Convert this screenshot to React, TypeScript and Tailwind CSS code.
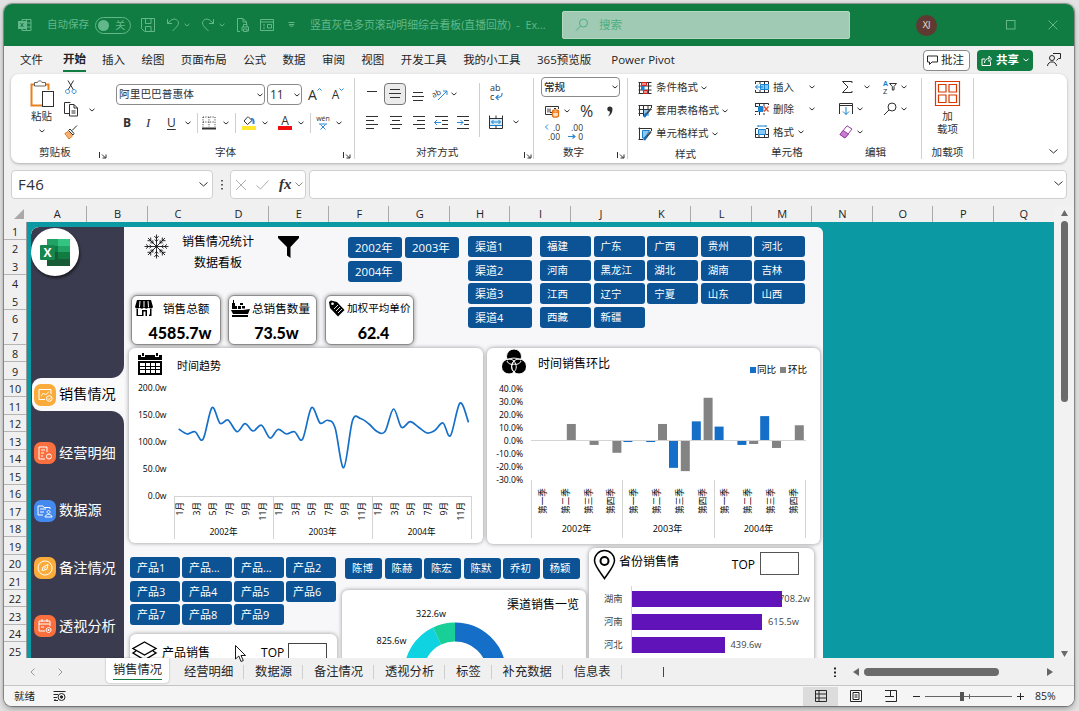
import type { ReactNode } from "react";
import clsx from "clsx";

const RIBBON_TABS = ["绘图", "页面布局", "公式", "数据", "审阅", "视图", "开发工具", "我的小工具", "365预览版"];
const COLUMNS = "ABCDEFGHIJKLMNOPQ".split("");
const ROWS = Array.from({ length: 25 }, (_, i) => i + 1);
const YEARS = ["2002年", "2003年", "2004年"];
const CHANNELS = ["渠道1", "渠道2", "渠道3", "渠道4"];
const PROVINCES = [
  "福建", "广东", "广西", "贵州", "河北",
  "河南", "黑龙江", "湖北", "湖南", "吉林",
  "江西", "辽宁", "宁夏", "山东", "山西",
  "西藏", "新疆",
];
const PRODUCTS = ["产品1", "产品...", "产品...", "产品2", "产品3", "产品4", "产品5", "产品6", "产品7", "产品8", "产品9"];
const PEOPLE = ["陈博", "陈赫", "陈宏", "陈默", "乔初", "杨颖"];

// 月度趋势曲线上的点
const TREND: [number, number][] = [
  [178.7, 429], [187, 434], [195, 431.7], [203, 439.3], [212, 407.7], [220, 423.3],
  [228, 420], [237, 431.7], [245, 423.7], [253, 431], [261.5, 425.3], [270, 438],
  [278, 429.5], [286.3, 434], [294.5, 431.7], [302.5, 439.3], [311.5, 407.7], [320, 423],
  [327.5, 420.3], [335, 427.5], [343.7, 467.7], [352.5, 420.5], [360.5, 418.5], [369, 424],
  [377, 431.5], [385, 431.5], [393.5, 409], [401.5, 427.3], [410, 421.7], [418, 426.7],
  [427, 433], [435, 430.3], [443, 423], [450.5, 435.7], [460, 403], [468.5, 422.3],
];
const YOY = [0, 0, 0, 0, -0.8, -0.8, -20.5, 15, 11, -3, 19, 0];
const MOM = [0, 13, -3, -9, 0, 13, -23, 33, 0, -2.3, -5.3, 12];

function smooth(points: [number, number][]) {
  let d = `M${points[0][0]} ${points[0][1]}`;
  for (let i = 0; i < points.length - 1; i++) {
    const p0 = points[i - 1] || points[i];
    const [p1, p2] = [points[i], points[i + 1]];
    const p3 = points[i + 2] || p2;
    d += `C${p1[0] + (p2[0] - p0[0]) / 6} ${p1[1] + (p2[1] - p0[1]) / 6} ${p2[0] - (p3[0] - p1[0]) / 6} ${p2[1] - (p3[1] - p1[1]) / 6} ${p2[0]} ${p2[1]}`;
  }
  return d;
}

type IconProps = { className?: string; w?: number; h?: number; children: ReactNode };

// 线性图标的统一外壳
function Icon({ className, w = 14, h = 14, children }: IconProps) {
  return (
    <svg
      width={w}
      height={h}
      viewBox={`0 0 ${w} ${h}`}
      fill="none"
      stroke="currentColor"
      strokeWidth={1}
      className={clsx("shrink-0 overflow-visible", className)}
    >
      {children}
    </svg>
  );
}

const Chev = ({ className }: { className?: string }) => (
  <Icon w={6} h={4} className={className}>
    <path d="M0.5 0.8L3 3L5.5 0.8" />
  </Icon>
);

const Sep = ({ className }: { className?: string }) => (
  <div className={clsx("w-px shrink-0 bg-[#cfcfcf]", className)} />
);

const Launcher = ({ className }: { className?: string }) => (
  <Icon w={8} h={8} className={className}>
    <path d="M0.5 7V1M3 3.5L6.5 7M7 3.5V7H3.5" />
  </Icon>
);

function TitleBar() {
  return (
    <header className="flex h-[42px] shrink-0 items-center bg-[#107c41] text-[#62b88b]">
      <Icon className="ml-[14px]">
        <path d="M4 3V1.5H13V12.5H4V11M4 5H13M4 9H13M8.5 1.5V12.5" />
        <rect x="0.5" y="3.5" width="7" height="7" fill="#62b88b" />
        <path d="M2.5 5L5.5 9M5.5 5L2.5 9" stroke="#107c41" />
      </Icon>
      <span className="ml-[15px] w-[42px] shrink-0 whitespace-nowrap text-[10.5px]">自动保存</span>
      <div className="ml-[6px] flex h-[17px] w-[36px] shrink-0 items-center rounded-full border border-current pl-[2px]">
        <div className="h-[11px] w-[11px] rounded-full bg-[#62b88b]" />
        <span className="ml-[6px] text-[10.5px] leading-none">关</span>
      </div>
      <Icon className="ml-[10px]">
        <path d="M1.5 0.5H13.5V13.5H3.5L0.5 10.5V0.5H2M4.5 0.5V5.5H10V0.5M4.5 13.5V8.5H10V13.5" />
      </Icon>
      <Icon className="ml-[11px]">
        <path d="M1.5 1V5.5H6M1.5 5.5L5 2.3C7.5 0.2 11 1 12.2 3.5C13 5.5 12 7.5 10.5 9L6.5 13" />
      </Icon>
      <Chev className="ml-[4px]" />
      <Icon className="ml-[11px]">
        <path d="M12.5 1V5.5H8M12.5 5.5L9 2.3C6.5 0.2 3 1 1.8 3.5C1 5.5 2 7.5 3.5 9L7.5 13" />
      </Icon>
      <Chev className="ml-[4px]" />
      <Icon className="ml-[11px]">
        <path d="M4 13.5H1.5V0.5H7L10.5 4V6.5M7 0.5V4H10.5M6 13V9H12.5V13H10.8M7.5 9V6.5H11V9M7.5 11H11V13.5H7.5Z" />
      </Icon>
      <Icon className="ml-[10px]">
        <path d="M0.5 1.5H13.5V12.5H0.5ZM0.5 4H13.5M3 7H5M3 10H5M7.5 6.5H11.5V10H7.5Z" />
      </Icon>
      <Icon w={7} h={6} className="ml-[14px]">
        <path d="M0.5 0.5H6.5M1.2 2.5H5.8L3.5 5Z" />
      </Icon>
      <span className="ml-[15px] w-[240px] shrink-0 whitespace-pre text-[10.8px]">竖直灰色多页滚动明细综合看板(直播回放)  -  Ex...</span>
      <div className="ml-[12px] flex h-[28px] w-[288px] shrink-0 items-center rounded-[2px] border border-[#b5d8c4] bg-[#a0cab3] text-[#4fae7f]">
        <Icon className="ml-[12px]">
          <circle cx="8.5" cy="5" r="4" />
          <path d="M5.6 8L1 12.7" />
        </Icon>
        <span className="ml-[10px] text-[11.5px]">搜索</span>
      </div>
      <div className="ml-[66px] flex h-[21px] w-[21px] shrink-0 items-center justify-center rounded-full bg-[#5f3a32] text-[9px] text-[#f1e4df]">XJ</div>
      <Icon w={10} h={10} className="ml-[69px]">
        <rect x="0.5" y="0.5" width="8.5" height="8.5" />
      </Icon>
      <Icon w={10} h={10} className="ml-[32px]">
        <path d="M0.5 0.5L9.5 9.5M9.5 0.5L0.5 9.5" />
      </Icon>
    </header>
  );
}

function RibbonTabs() {
  return (
    <nav className="flex h-[28px] shrink-0 items-center whitespace-nowrap text-[11.5px] text-[#242424]">
      <span className="ml-[16px]">文件</span>
      <span className="ml-[20px] border-b-2 border-[#107c41] pb-px font-bold leading-[20px]">开始</span>
      <span className="ml-[16px]">插入</span>
      {RIBBON_TABS.map((tab) => (
        <span key={tab} className="ml-[16.4px]">{tab}</span>
      ))}
      <span className="ml-[20px]">Power Pivot</span>
      <div className="ml-auto flex h-[21px] w-[47px] items-center rounded-[4px] border border-[#8a8a8a] bg-white">
        <Icon w={12} h={10} className="ml-[3px]">
          <path d="M0.5 1H10.5V7H5L2.5 9.5V7H0.5Z" />
        </Icon>
        <span className="ml-[2px] leading-none">批注</span>
      </div>
      <div className="ml-[7px] flex h-[21px] w-[56px] items-center rounded-[4px] bg-[#107c41] text-white">
        <Icon w={11} h={11} className="ml-[4px]">
          <path d="M4 4H1V10.5H9.5V6.5M3.5 8C3.5 5 5.5 3.5 8 3.5V1L10.5 4L8 6.5V4.5" />
        </Icon>
        <span className="ml-[4px] font-bold leading-none">共享</span>
        <Chev className="ml-[4px]" />
      </div>
      <Icon className="ml-[14px] mr-[13px]">
        <circle cx="5" cy="5" r="2.5" />
        <path d="M0.5 13C1 7.5 9 7.5 9.5 13M6 0.5H13.5V5.5H11.5L9.5 7.5" />
      </Icon>
    </nav>
  );
}

const GroupLabel = ({ children }: { children: ReactNode }) => (
  <div className="mt-auto flex h-[20px] items-center whitespace-nowrap pb-[2px] text-[10.6px] leading-none">{children}</div>
);

function ClipboardGroup() {
  return (
    <section className="flex w-[96px] flex-col">
      <div className="flex pt-[6px]">
        <div className="ml-[18px] flex w-[25px] flex-col items-center">
          <Icon w={24} h={28}>
            <path d="M4.5 4.5H1.5V25.5H12M15.5 4.5H18.5V10" stroke="#e8801f" strokeWidth={2} />
            <path d="M4.5 6V2.5H7.5C7.5 0.3 12 0.3 12 2.5H15.5V6Z" fill="white" stroke="#666" />
            <rect x="12.5" y="11.5" width="11" height="15" fill="white" />
          </Icon>
          <span className="mt-[3px] text-[10.5px] leading-none">粘贴</span>
          <Chev className="mt-[7px]" />
        </div>
        <div className="ml-[10px] flex w-[14px] flex-col">
          <Icon h={15}>
            <path d="M4 0.5L9.5 10M9.5 0.5L4 10" />
            <path d="M3.5 9.5a2 2 0 1 0 .1 0M10 9.5a2 2 0 1 0 .1 0" stroke="#2b88d8" />
          </Icon>
          <Icon className="mt-[7px]" h={15}>
            <path d="M5 11.5H0.5V0.5H6.5M5.5 2.5H10L13.5 6V14H5.5ZM10 2.5V6H13.5M7.5 9H11.5M7.5 11H11.5" />
          </Icon>
          <Icon className="mt-[8px]" h={15}>
            <path d="M13 0.5L8 5.5M6 4L10 8.5L9 10L4.5 5.5Z" />
            <path d="M4 6.5L8.5 11L5 14L0.8 8.5Z" fill="#f5b27a" stroke="#e8801f" />
          </Icon>
        </div>
        <Chev className="ml-[11px] mt-[28px]" />
      </div>
      <GroupLabel>
        <span className="ml-[28px]">剪贴板</span>
        <Launcher className="ml-auto mr-0 mt-[5px]" />
      </GroupLabel>
    </section>
  );
}

function FontGroup() {
  return (
    <section className="flex w-[247px] flex-col">
      <div className="mt-[10px] flex h-[21px] items-center text-[10.7px]">
        <div className="ml-[9px] flex h-[21px] w-[149px] items-center rounded-[4px] border border-[#8a8a8a] pl-[2px]">
          <span className="leading-none">阿里巴巴普惠体</span>
          <Chev className="ml-auto mr-[1px]" />
        </div>
        <div className="ml-[2px] flex h-[21px] w-[35px] items-center rounded-[4px] border border-[#8a8a8a] pl-[2px] text-[12px]">
          11
          <Chev className="ml-auto mr-[1px]" />
        </div>
        <span className="ml-[6px] text-[14px] leading-none">A</span>
        <Icon w={5} h={3} className="mb-[10px] text-[#2b88d8]"><path d="M0.5 2.5L2.5 0.5L4.5 2.5" /></Icon>
        <span className="ml-[10px] text-[12px] leading-none">A</span>
        <Icon w={5} h={3} className="mb-[10px] text-[#2b88d8]"><path d="M0.5 0.5L2.5 2.5L4.5 0.5" /></Icon>
      </div>
      <div className="mt-[7px] flex h-[21px] items-center text-[12px]">
        <span className="ml-[16px] w-[8px] font-bold">B</span>
        <span className="ml-[15px] w-[6px] font-['Liberation_Serif'] text-[13px] italic">I</span>
        <span className="ml-[15px] w-[9px] underline underline-offset-2">U</span>
        <Chev className="ml-[9px]" />
        <Sep className="ml-[6px] h-[20px]" />
        <Icon className="ml-[4px]">
          <path d="M1 1H13M1 1V11M13 1V11M7 1V11M1 6H13" strokeDasharray="1 1.4" />
          <path d="M0 12.5H14" strokeWidth={2} />
        </Icon>
        <Chev className="ml-[7px]" />
        <Sep className="ml-[6px] h-[20px]" />
        <Icon className="ml-[6px]">
          <path d="M6 0.5L2 5L5.5 8.5L10 4.5L6.5 1" />
          <path d="M9 3C11 2.5 12 4 11.5 8" stroke="#2b88d8" strokeWidth={2} />
          <rect x="0" y="10" width="14" height="4" fill="#ffe92e" stroke="none" />
        </Icon>
        <Chev className="ml-[6px]" />
        <div className="ml-[10px] flex w-[14px] flex-col items-center">
          <span className="text-[12px] leading-[11px]">A</span>
          <div className="h-[4px] w-full bg-[#f20d0d]" />
        </div>
        <Chev className="ml-[6px]" />
        <Sep className="ml-[6px] h-[20px]" />
        <div className="ml-[5px] flex w-[14px] flex-col items-center">
          <span className="text-[7px] leading-[7px]">wén</span>
          <Icon w={8} h={7} className="mt-px text-[#2b88d8]"><path d="M0 1H8M1.5 1.5L6.5 6.5M6.5 1.5L1.5 6.500" /></Icon>
        </div>
        <Chev className="ml-[6px]" />
      </div>
      <GroupLabel>
        <span className="ml-[108px]">字体</span>
        <Launcher className="ml-auto mr-[3px] mt-[5px]" />
      </GroupLabel>
    </section>
  );
}

function AlignGroup() {
  return (
    <section className="flex w-[179px] flex-col border-l border-[#d0d0d0] my-[4px]">
      <div className="flex h-[61px] -mb-[4px] pt-[5px]">
        <div className="w-[124px]">
          <div className="flex h-[22px] items-center">
            <Icon className="ml-[10px]"><path d="M2 4.5H12" /></Icon>
            <div className="ml-[5px] flex h-[22px] w-[22px] items-center justify-center rounded-[4px] border border-[#777] bg-[#ebebeb]">
              <Icon><path d="M2 2.5H12M1 6.5H13M2 10.5H12" /></Icon>
            </div>
            <Icon className="ml-[5px]"><path d="M2 5.5H12M1 9.500H13M2 13.500H12" /></Icon>
            <Icon className="ml-[8px]" w={15}>
              <text x="-1" y="9" fontSize="8" fill="currentColor" stroke="none" transform="rotate(-25 4 7)">ab</text>
              <path d="M5 13L14 4M10 4H14V8" stroke="#2b88d8" />
            </Icon>
            <Chev className="ml-[3px]" />
          </div>
          <div className="mt-[6px] flex h-[22px] items-center">
            <Icon className="ml-[11px]"><path d="M0 1.5H12M0 5.5H8M0 9.5H12M0 13.5H8" /></Icon>
            <Icon className="ml-[9px]"><path d="M1 1.5H13M3 5.5H11M1 9.5H13M3 13.5H11" /></Icon>
            <Icon className="ml-[9px]"><path d="M1 1.5H13M5 5.5H13M1 9.5H13M5 13.5H13" /></Icon>
            <Icon className="ml-[8px]"><path d="M1 1.5H14M8 5.5H14M8 9.5H14M1 13.5H14" /><path d="M7 7.5H0.5M3 5L0.5 7.5L3 10" stroke="#2b88d8" /></Icon>
            <Icon className="ml-[9px]"><path d="M0 1.5H12M7 5.5H12M7 9.5H12M0 13.5H12" /><path d="M0 7.5H6M3.5 5L6 7.5L3.5 10" stroke="#2b88d8" /></Icon>
          </div>
        </div>
        <Sep className="h-[54px]" />
        <div>
          <div className="ml-[10px] flex h-[22px] w-[15px] flex-col text-[9px] leading-[9px]">
            <span>ab</span>
            <span className="flex">
              c
              <Icon w={8} h={8} className="ml-px mt-px text-[#2b88d8]"><path d="M7 0C7.500 3 6 4.500 1 4.500M3.500 2L1 4.500L3.500 7" strokeWidth={1.200} /></Icon>
            </span>
          </div>
          <div className="mt-[6px] flex h-[22px] items-center">
            <Icon className="ml-[9px]">
              <rect x="0.5" y="3.5" width="13" height="7" fill="#d5ebfa" stroke="#1583cf" />
              <path d="M0.500 0.500V13.500M13.500 0.500V13.500M0.500 3.500H13.500M0.500 13.500H13.500M7 0.500V3.500M7 10.500V13.500" />
              <path d="M2.500 7H11.500M4.500 5L2.500 7L4.500 9M9.500 5L11.500 7L9.500 9" stroke="#1583cf" />
            </Icon>
            <Chev className="ml-[10px]" />
          </div>
        </div>
      </div>
      <div className="mt-auto -mb-[4px]">
        <GroupLabel>
          <span className="ml-[61px]">对齐方式</span>
          <Launcher className="ml-auto mr-[1px] mt-[5px]" />
        </GroupLabel>
      </div>
    </section>
  );
}

function NumberGroup() {
  return (
    <section className="my-[4px] flex w-[94px] flex-col border-l border-[#d0d0d0]">
      <div className="-mt-[1px] ml-[7px] flex h-[20px] w-[79px] items-center rounded-[4px] border border-[#8a8a8a] pl-[2px] text-[10.6px] font-medium">
        <span className="leading-none">常规</span>
        <Chev className="ml-auto mr-[1px]" />
      </div>
      <div className="mt-[4px] flex h-[20px] items-center">
        <Icon className="ml-[11px]">
          <path d="M7 10.500H0.500V2.500H13.500V5M3 4.500V8.500M5 4.500V8.500H7M9 4.500H11" />
          <path d="M7.500 7C7.500 5.500 13.500 5.500 13.500 7V12C13.500 13.500 7.500 13.500 7.500 12ZM7.500 7C7.500 8.500 13.500 8.500 13.500 7" fill="#fde0c2" stroke="#e8700f" strokeWidth={1.300} />
        </Icon>
        <Chev className="ml-[5px]" />
        <span className="ml-[10px] w-[14px] text-[16px] leading-none">%</span>
        <Icon w={6} h={11} className="ml-[13px]">
          <path d="M5.500 3C5.500 6.500 4 9 1 10.500C2.500 8.500 3 7 2.800 5.500C-0.500 5.500 -0.500 0.500 2.800 0.500C4.500 0.500 5.500 1.500 5.500 3Z" fill="currentColor" stroke="none" />
        </Icon>
      </div>
      <div className="mt-[1px] flex h-[20px] items-center text-[8.5px] leading-[9px]">
        <div className="ml-[11px] flex w-[15px] flex-col items-end">
          <span className="flex w-full items-start justify-between">
            <Icon w={4} h={6} className="mt-px text-[#2b88d8]"><path d="M3 0.5L0.5 3L3 5.5" /></Icon>
            .0
          </span>
          <span>.00</span>
        </div>
        <div className="ml-[8px] flex w-[15px] flex-col items-end">
          <span>.00</span>
          <span className="flex w-full items-center justify-between">
            <Icon w={8} h={5} className="text-[#2b88d8]"><path d="M0 2.500H7M4.500 0.500L7 2.500L4.500 4.500" strokeWidth={1.200} /></Icon>
            0
          </span>
        </div>
      </div>
      <div className="mt-auto -mb-[4px]">
        <GroupLabel>
          <span className="ml-[29px]">数字</span>
          <Launcher className="ml-auto mr-[2px] mt-[5px]" />
        </GroupLabel>
      </div>
    </section>
  );
}

// 表格类命令图标
const Grid = ({ kind }: { kind: string }) => (
  <Icon>
    {kind === "cond" && (
      <>
        <path d="M0.500 1.500H13.500M0.500 5H13.500M0.500 9H13.500M0.500 12.500H13.500M1.500 1V13M10.500 1V13" />
        <path d="M3.500 1.500H8.500V4.500H3.500ZM5.500 9.500H9.500V12.500H5.500Z" fill="#f48a8a" stroke="#d8201c" />
        <rect x="3" y="5" width="3.500" height="4" fill="#1583cf" stroke="none" />
      </>
    )}
    {kind === "table" && (
      <>
        <path d="M0.500 1.500H13.500M0.500 5.500H13.500M0.500 9.500H5M1.500 1V12M5.500 1V12M10 1V6M13.500 1V4" />
        <rect x="6" y="6" width="5" height="6" fill="#8cc8f2" stroke="none" />
        <path d="M13 4.500L8.500 10" stroke="#444" strokeWidth={1.800} />
        <path d="M8.500 9.500L6 13" stroke="#1670b5" strokeWidth={2.600} />
      </>
    )}
    {kind === "style" && (
      <>
        <path d="M0.500 1.500H13.500V4M1.500 0.500V12.500H5M0.500 12.500H5" />
        <path d="M4.500 3.500H11.500L7 11H4.500Z" fill="#8cc8f2" stroke="#1583cf" />
        <path d="M13 4.500L8.500 10" stroke="#444" strokeWidth={1.800} />
        <path d="M8.500 9.500L6 13" stroke="#1670b5" strokeWidth={2.600} />
      </>
    )}
    {kind === "insert" && (
      <>
        <path d="M0.500 4V1.500H13.500V4M0.500 10V12.500H13.500V10M5 1.500V4M9.500 1.500V4M5 10V12.500M9.500 10V12.500" />
        <path d="M5.500 4.500H13.500V9.500H5.500ZM9.500 4.500V9.500" fill="#8cc8f2" stroke="#1583cf" />
        <path d="M8 7H0.500M3 4.500L0.500 7L3 9.500" stroke="#1583cf" />
      </>
    )}
    {kind === "delete" && (
      <>
        <path d="M0 1.500H13.500M0 4.500H3M0 9.500H3M0.500 1.500V4M4.500 1.500V4M9 1.500V4M13.500 1.500V3M4.500 10V13M9 11V13M0 12.500H1" />
        <path d="M3.500 4.500H8V9.500H3.500Z" fill="#1583cf" stroke="#1583cf" />
        <path d="M9 4.500L13.500 9.500M13.500 4.500L9 9.500" stroke="#e04a2b" strokeWidth={1.300} />
      </>
    )}
    {kind === "format" && (
      <>
        <path d="M3 3.500H0.500V12.500H13.500V3.500H11M0.500 9.500H3M11 9.500H13.500M4 12.500V10M9.500 12.500V10" />
        <path d="M3.500 4.500H10.500V9.500H3.500ZM3 1H11M3 0V2M11 0V2" fill="#8cc8f2" stroke="#1583cf" />
      </>
    )}
  </Icon>
);

function Command({ icon, label, gap }: { icon: string; label: string; gap?: string }) {
  return (
    <div className="flex h-[23px] items-center whitespace-nowrap text-[10.5px]">
      <Grid kind={icon} />
      <span className="ml-[4px] leading-none">{label}</span>
      <Chev className={gap || "ml-[3px]"} />
    </div>
  );
}

function Ribbon() {
  return (
    <div className="ml-[7px] flex h-[89px] w-[1056px] shrink-0 rounded-[8px] bg-white text-[#303030] shadow-[0_1px_3px_rgba(0,0,0,0.28)]">
      <ClipboardGroup />
      <FontGroup />
      <AlignGroup />
      <NumberGroup />
      <section className="my-[4px] flex w-[121px] flex-col border-l border-[#d0d0d0]">
        <div className="-mt-[2px] ml-[10px]">
          <Command icon="cond" label="条件格式" />
          <Command icon="table" label="套用表格格式" />
          <Command icon="style" label="单元格样式" />
        </div>
        <div className="-mb-[4px] mt-auto pl-[47px]"><GroupLabel>样式</GroupLabel></div>
      </section>
      <section className="flex w-[88px] flex-col pl-[7px] pt-[2px]">
        <Command icon="insert" label="插入" gap="ml-[15px]" />
        <Command icon="delete" label="删除" gap="ml-[15px]" />
        <Command icon="format" label="格式" gap="ml-[4px]" />
        <div className="mt-auto pl-[16px]"><GroupLabel>单元格</GroupLabel></div>
      </section>
      <section className="flex w-[85px] flex-col pl-px pt-[2px]">
        <div className="flex h-[23px] items-center">
          <Icon className="ml-[3px]"><path d="M12 3V1.5H2.5L8 7L2.5 12.5H12V11" /></Icon>
          <Chev className="ml-[10px]" />
          <Icon className="ml-[13px]">
            <text x="0" y="6" fontSize="7" fontWeight="bold" fill="#1583cf" stroke="none">A</text>
            <text x="0" y="13.500" fontSize="7.500" fill="currentColor" stroke="none">Z</text>
            <path d="M6.5 3.5H13.5L11 6.5V10H9.3V6.5Z" />
          </Icon>
          <Chev className="ml-[4px]" />
        </div>
        <div className="flex h-[23px] items-center">
          <Icon className="ml-[2px]"><path d="M0.5 12V1.5H13.5V12M0.5 3.5H13.5" /><path d="M7 5V12.5M4 9.5L7 12.5L10 9.5" stroke="#1583cf" /></Icon>
          <Chev className="ml-[4px]" />
          <Icon className="ml-[20px]"><circle cx="9" cy="5" r="4" /><path d="M6 8L1 13" /></Icon>
          <Chev className="ml-[4px]" />
        </div>
        <div className="flex h-[23px] items-center">
          <Icon className="ml-[2px]">
            <path d="M8 0.8L13 4L6 13L1 9.5Z" stroke="#9a3fa8" />
            <path d="M4 5.5L9.5 9L6 13L1 9.5Z" fill="#c77fd0" stroke="#9a3fa8" />
          </Icon>
          <Chev className="ml-[4px]" />
        </div>
        <div className="mt-auto pl-[28px]"><GroupLabel>编辑</GroupLabel></div>
      </section>
      <section className="my-[4px] flex w-[53px] flex-col items-center border-x border-[#d0d0d0]">
        <Icon w={25} h={25} className="mt-[3px] text-[#d83b01]">
          <path d="M0.5 0.5H24.5V24.5H0.5ZM3.5 3.5H11V11H3.5ZM14 3.5H21.5V11H14ZM3.5 14H11V21.5H3.5ZM14 14H21.5V21.5H14Z" strokeWidth={1.2} />
        </Icon>
        <div className="mt-[4px] text-center text-[10.5px] leading-[13px]">加<br />载项</div>
        <div className="-mb-[4px] mt-auto"><GroupLabel>加载项</GroupLabel></div>
      </section>
      <Icon w={9} h={5} className="ml-auto mr-[9px] mt-[75px]"><path d="M0.5 0.5L4.5 4L8.5 0.5" /></Icon>
    </div>
  );
}

function FormulaBar() {
  return (
    <div className="mt-[7px] flex h-[29px] shrink-0 items-center text-[#303030]">
      <div className="ml-[7px] flex h-[29px] w-[202px] items-center rounded-[4px] border border-[#cfcfcf] bg-white pl-[6px] text-[15px] tracking-[0.5px]">
        F46
        <Icon w={9} h={5} className="ml-auto mr-[4px]"><path d="M0.5 0.5L4.5 4L8.5 0.5" /></Icon>
      </div>
      <Icon w={2} h={10} className="ml-[8px]"><path d="M1 0V10" strokeWidth={1.5} strokeDasharray="1.5 2.5" /></Icon>
      <div className="ml-[7px] flex h-[29px] w-[76px] items-center rounded-[4px] border border-[#cfcfcf] bg-white">
        <Icon w={12} h={12} className="ml-[4px] text-[#b0b0b0]"><path d="M1 1L11 11M11 1L1 11" /></Icon>
        <Icon w={13} h={10} className="ml-[9px] text-[#b0b0b0]"><path d="M0.5 5.5L4.5 9L12.5 0.5" /></Icon>
        <span className="ml-[10px] w-[13px] font-['Liberation_Serif'] text-[15px] font-bold italic leading-none">fx</span>
        <Icon w={8} h={5} className="ml-[3px] text-[#888]"><path d="M0.5 0.5L4 4L7.5 0.5" /></Icon>
      </div>
      <div className="ml-[3px] flex h-[29px] w-[758px] items-center rounded-[4px] border border-[#cfcfcf] bg-white">
        <Icon w={9} h={5} className="mb-[3px] ml-auto mr-[3px]"><path d="M0.5 0.5L4.5 4L8.5 0.5" /></Icon>
      </div>
    </div>
  );
}

// 切片器按钮
const Slicer = ({ label, className }: { label: string; className?: string }) => (
  <div className={clsx("flex h-[21px] items-center whitespace-nowrap rounded-[3px] bg-[#0b5394] pl-[7px] text-[10.5px] leading-none text-white", className)}>
    {label}
  </div>
);

const MENU = [
  { label: "经营明细", color: "bg-[#f96f3d]", d: "M5 5H13V10M5 5V17H11M7 8H11M7 11H10M7 14H9M12.5 14.5a2.5 2.5 0 1 0 5 0a2.5 2.5 0 1 0-5 0" },
  { label: "数据源", color: "bg-[#4489ee]", d: "M4 6H9L10 7.5H16V9M4 6V15H9M6 9H12M6 12H10M14.5 10.5a1.5 1.5 0 1 0 .1 0M11 17C11.5 13.5 17.5 13.5 18 17Z" },
  { label: "备注情况", color: "bg-[#fbab3a]", d: "M11 4a7 7 0 1 0 .1 0M8 14L9 10L14 7.5L13 12L9 13.5M10 11.5L12 10" },
  { label: "透视分析", color: "bg-[#f96f3d]", d: "M5 6H16V11M5 6V16H11M5 9H16M8 4V7M13 4V7M7 12H10M14.5 12.5a2.5 2.5 0 1 0 .1 0M14.5 14V16M13.5 15H15.5" },
];

function Sidebar() {
  return (
    <aside className="flex w-[93px] shrink-0 flex-col">
      <div className="h-[151px] shrink-0 rounded-br-[13px] rounded-tl-[8px] bg-[#3a3b4e] pt-px">
        <div className="flex h-[48px] w-[48px] items-center justify-center rounded-full bg-white shadow-[1px_2px_3px_rgba(0,0,0,0.6)]">
          <svg width="30" height="29" viewBox="0 0 30 29">
            <path d="M7 1H18V14H7Z" fill="#21a366" />
            <path d="M18 1H30V8H18Z" fill="#33c481" />
            <path d="M18 8H30V14H18Z" fill="#21a366" />
            <path d="M7 14H30V28H7Z" fill="#185c37" />
            <path d="M18 14H30V21H18Z" fill="#107c41" />
            <path d="M7 8H18V14H7Z" fill="#107c41" />
            <rect x="0" y="7" width="15" height="15" rx="1" fill="#17864c" />
            <text x="7.5" y="18.5" textAnchor="middle" fontSize="12" fontWeight="bold" fill="white">X</text>
          </svg>
        </div>
      </div>
      <div className="h-[33px] shrink-0 bg-[#3a3b4e] pl-[1px]">
        <div className="flex h-full items-center rounded-l-[9px] bg-[#fafafb]">
          <div className="ml-[2px] h-[22px] w-[22px] rounded-[7px] bg-[#fbab3a] text-white">
            <Icon w={22} h={22}><path d="M11 15.5H5V5.5H17V10M7 12L9.5 9L11.5 11L15 7.5M12.5 14.5a2.8 2.8 0 1 0 5.6 0a2.8 2.8 0 1 0-5.6 0M14 14.5L15 15.5L17 13.5" /></Icon>
          </div>
          <span className="ml-[3px] text-[14.2px] leading-none text-black">销售情况</span>
        </div>
      </div>
      <div className="flex-1 rounded-tr-[13px] bg-[#3a3b4e] pt-[13px]">
        {MENU.map((item) => (
          <div key={item.label} className="flex h-[57.7px] items-center">
            <div className={clsx("ml-[3px] h-[22px] w-[22px] shrink-0 rounded-[7px] text-white", item.color)}>
              <Icon w={22} h={22}><path d={item.d} /></Icon>
            </div>
            <span className="ml-[3px] whitespace-nowrap text-[14.2px] leading-none text-white">{item.label}</span>
          </div>
        ))}
      </div>
    </aside>
  );
}

function Card({ icon, label, value, className, textClass }: { icon: ReactNode; label: string; value: string; className: string; textClass: string }) {
  return (
    <div className={clsx("h-[50px] shrink-0 rounded-[6px] border border-[#8d8d8d] bg-white pt-[3px] shadow-[0_0_4px_rgba(0,0,0,0.45)]", className)}>
      <div className="flex h-[19px] items-center whitespace-nowrap text-black">
        {icon}
        <span className={clsx("leading-none", textClass)}>{label}</span>
      </div>
      <div className="mt-[5px] pl-[8px] text-center font-['Lato'] text-[16px] font-black leading-[20px] text-black">{value}</div>
    </div>
  );
}

function TopArea() {
  return (
    <div className="flex h-[121px] shrink-0">
      <div className="w-[344px] shrink-0">
        <div className="flex h-[68px] items-start text-black">
          <Icon w={25} h={25} className="ml-[20px] mt-[7px]">
            {[0, 45, 90, 135, 180, 225, 270, 315].map((a) => (
              <path key={a} d="M12.5 12.5V0.5M10.300 2L12.5 4.500L14.700 2M10.800 5.500L12.5 7.500L14.200 5.500" strokeWidth={0.8} transform={`rotate(${a} 12.5 12.5)`} />
            ))}
          </Icon>
          <div className="ml-[13px] mt-[4px] w-[72px] text-center text-[12px] leading-[21px]">销售情况统计<br />数据看板</div>
          <svg width="21" height="22" viewBox="0 0 21 22" className="ml-[24px] mt-[9px]">
            <path d="M0 0H21V2L12.5 11V22L9 19.500V11L0 2Z" />
          </svg>
          <div className="ml-[49px] mt-[10px] grid grid-cols-[54px_54px] gap-[3px]">
            {YEARS.map((y) => <Slicer key={y} label={y} className="!text-[11.5px]" />)}
          </div>
        </div>
        <div className="flex pl-[7px]">
          <Card
            className="w-[90px]"
            textClass="ml-[10px] text-[11.6px]"
            label="销售总额"
            value="4585.7w"
            icon={
              <svg width="18" height="17" viewBox="0 0 18 17" className="ml-[3px]">
                <path d="M2 0H16L18 7C17 9 14.5 9 13.5 7.5C12.5 9 10 9 9 7.5C8 9 5.5 9 4.5 7.5C3.5 9 1 9 0 7ZM1.5 9H3V15H7V10H12V16H10.500V11.500H8.500V16H1.500ZM15 9H16.500V16H14V14.500H15Z" />
                <path d="M5 1L4.500 7M9 1V7M13 1L13.500 7" stroke="white" />
              </svg>
            }
          />
          <Card
            className="ml-[7px] w-[89px]"
            textClass="ml-[2px] text-[11.6px]"
            label="总销售数量"
            value="73.5w"
            icon={
              <svg width="19" height="18" viewBox="0 0 19 18" className="ml-[2px]">
                <path d="M0 10H12L19 9L17 14H2ZM1 3H4V6H6V9H1ZM2 0H3V3H2ZM7 6H10V9H7ZM11 6H14V8.500H11ZM9 3H12V5H9ZM1 15H17V17H1Z" />
              </svg>
            }
          />
          <Card
            className="ml-[8px] w-[89px]"
            textClass="ml-[2px] text-[10.6px]"
            label="加权平均单价"
            value="62.4"
            icon={
              <svg width="16" height="17" viewBox="0 0 16 17" className="ml-[3px]">
                <path d="M0 2L2 0.500L8 2L15.500 10L9 16.500L1 8Z" />
                <circle cx="3.500" cy="3.800" r="1.300" fill="white" />
                <path d="M5 9L9 5M7 11L11 7M9 13L13 9" stroke="white" strokeWidth="0.900" />
              </svg>
            }
          />
        </div>
      </div>
      <div className="mt-[9px] flex w-[64px] shrink-0 flex-col gap-[2.7px]">
        {CHANNELS.map((c) => <Slicer key={c} label={c} className="!text-[11px]" />)}
      </div>
      <div className="ml-[8px] mt-[9px] grid h-[92px] grid-cols-[repeat(5,51px)] gap-x-[2.6px] gap-y-[2.7px]">
        {PROVINCES.map((p) => <Slicer key={p} label={p} />)}
      </div>
    </div>
  );
}

function TrendChart() {
  const months = ["1月", "3月", "5月", "7月", "9月", "11月"];
  return (
    <div className="ml-[5px] h-[195px] w-[354px] shrink-0 rounded-[6px] bg-white shadow-[0_0_4px_rgba(0,0,0,0.4)]">
      <div className="flex h-[32px] items-center text-black">
        <svg width="24" height="22" viewBox="0 0 24 22" className="ml-[9px]">
          <path d="M0 2H3V4H7V2H17V4H21V2H24V7H0ZM4 0H6V3H4ZM18 0H20V3H18ZM0 8H24V22H0Z" />
          <path d="M2 10H7V13H2ZM8 10H12V13H8ZM13 10H17V13H13ZM18 10H22V13H18ZM2 14H7V16H2ZM8 14H12V16H8ZM13 14H17V16H13ZM18 14H22V16H18ZM2 17H7V20H2ZM8 17H12V20H8ZM13 17H17V20H13ZM18 17H22V20H18Z" fill="white" />
        </svg>
        <span className="ml-[15px] mt-[4px] text-[11px]">时间趋势</span>
      </div>
      <svg width="354" height="163" viewBox="129 380 354 163" fontSize="8.6">
        {["200.0w", "150.0w", "100.0w", "50.0w", "0.0w"].map((t, i) => (
          <text key={t} x="166.500" y={390.5 + i * 27.1} textAnchor="end">{t}</text>
        ))}
        <path d="M174 496.500H472M174.500 496V539M273.500 496V539M372.500 496V539M471.500 496V539" stroke="#d4d4d4" fill="none" />
        {[0, 1, 2].map((y) =>
          months.map((m, i) => (
            <text key={`${y}${m}`} transform={`translate(${183.2 + y * 99 + i * 16.5} 502) rotate(-90)`} textAnchor="end">{m}</text>
          ))
        )}
        {YEARS.map((y, i) => <text key={y} x={223.5 + i * 99} y="535" textAnchor="middle">{y}</text>)}
        <path d={smooth(TREND)} fill="none" stroke="#156fc9" strokeWidth="1.700" />
      </svg>
    </div>
  );
}

function RatioChart() {
  const quarters = ["第一季", "第二季", "第三季", "第四季"];
  const bar = (v: number, x: number, fill: string) => (
    <rect x={x} y={v > 0 ? 441 - v * 1.31 : 441} width="9" height={Math.abs(v) * 1.31} fill={fill} />
  );
  return (
    <div className="ml-[4px] h-[196px] w-[333px] shrink-0 rounded-[6px] bg-white shadow-[0_0_4px_rgba(0,0,0,0.4)]">
      <div className="flex h-[32px] items-start text-black">
        <svg width="24" height="26" viewBox="0 0 24 26" className="ml-[15px] mt-[1px]">
          <g stroke="white">
            <circle cx="12" cy="7.500" r="7.500" />
            <circle cx="7" cy="17.500" r="7.500" />
            <circle cx="17" cy="17.500" r="7.500" />
          </g>
          <path d="M5 11C9 8.500 15 8.500 19 11M12 12C9 16 9 20 12 23C15 20 15 16 12 12M5 12C6 15 10 16 12 15C14 16 18 15 19 12" stroke="white" fill="none" />
        </svg>
        <span className="ml-[12px] mt-[7px] text-[12px] leading-[18px]">时间销售环比</span>
        <div className="ml-auto mr-[13px] mt-[17px] flex items-center text-[9.5px] leading-[10px]">
          <div className="h-[6px] w-[6px] bg-[#156fc9]" />
          <span className="ml-px">同比</span>
          <div className="ml-[4px] h-[6px] w-[6px] bg-[#838383]" />
          <span className="ml-[2px]">环比</span>
        </div>
      </div>
      <svg width="333" height="163" viewBox="487 380 333 163" fontSize="8.600">
        {[40, 30, 20, 10, 0, -10, -20, -30].map((v) => (
          <text key={v} x="523" y={444 - v * 1.31} textAnchor="end">{v.toFixed(1)}%</text>
        ))}
        {YOY.map((v, i) => <g key={i}>{bar(v, 532.2 + i * 22.8, "#156fc9")}</g>)}
        {MOM.map((v, i) => <g key={i}>{bar(v, 544 + i * 22.8, "#838383")}</g>)}
        <path d="M531 440.500H806M531.500 480V538M622.500 480V538M714.500 480V538M805.500 480V538" stroke="#d4d4d4" fill="none" />
        {YOY.map((_, i) => (
          <text key={i} transform={`translate(${546 + i * 22.8} 501) rotate(-90)`} textAnchor="middle">{quarters[i % 4]}</text>
        ))}
        {YEARS.map((y, i) => <text key={y} x={576.5 + i * 91} y="532" textAnchor="middle" fontSize="9">{y}</text>)}
      </svg>
    </div>
  );
}

function BottomArea() {
  const provinces = [
    { name: "湖南", value: "708.2w", width: 150, gap: "ml-[-3px]" },
    { name: "河南", value: "615.5w", width: 130, gap: "ml-[6px]" },
    { name: "河北", value: "439.6w", width: 92.5, gap: "ml-[6px]" },
  ];
  return (
    <div className="flex h-[114px] shrink-0 items-start overflow-hidden">
      <div className="ml-[6px] w-[207px] shrink-0 pt-[13px]">
        <div className="grid grid-cols-[repeat(4,50px)] gap-x-[2px] gap-y-[2.7px]">
          {PRODUCTS.map((p, i) => <Slicer key={i} label={p} className="!text-[11px]" />)}
        </div>
        <div className="mt-[9px] flex h-[60px] items-start rounded-[6px] bg-white shadow-[0_0_4px_rgba(0,0,0,0.4)]">
          <Icon w={25} h={22} className="ml-[2px] mt-[7px] text-black">
            <path d="M12.500 1L24 7.500L12.500 14L1 7.500ZM4 10L1 12L12.500 19L24 12L21 10" strokeWidth={1.4} />
          </Icon>
          <span className="ml-[5px] mt-[10px] text-[12px] leading-[18px] text-black">产品销售</span>
          <span className="ml-[51px] mt-[10px] text-[12px] leading-[18px]">TOP</span>
          <div className="ml-[4px] mt-[9px] h-[23px] w-[39px] border border-[#444]" />
        </div>
      </div>
      <div className="ml-[5px] w-[244px] shrink-0 pt-[14px]">
        <div className="ml-[3px] flex gap-[2.5px]">
          {PEOPLE.map((p) => <Slicer key={p} label={p} className="w-[37px]" />)}
        </div>
        <svg width="244" height="80" viewBox="342 590 244 80" className="mt-[11px] rounded-[6px] bg-white shadow-[0_0_4px_rgba(0,0,0,0.4)]">
          <text x="579" y="608.500" textAnchor="end" fontSize="12">渠道销售一览</text>
          <text x="446" y="617" textAnchor="end" fontSize="9">322.6w</text>
          <text x="406.500" y="643.500" textAnchor="end" fontSize="9">825.6w</text>
          <path d="M455 632A41.500 41.500 0 1 1 414 679" stroke="#156fc9" strokeWidth="19" fill="none" />
          <path d="M413.500 673.500A41.500 41.500 0 0 1 437 636" stroke="#0fd3e0" strokeWidth="19" fill="none" />
          <path d="M437 636A41.500 41.500 0 0 1 455 632" stroke="#17cf97" strokeWidth="19" fill="none" />
        </svg>
      </div>
      <div className="ml-[3px] mt-[4px] h-[140px] w-[225px] shrink-0 rounded-[6px] bg-white shadow-[0_0_4px_rgba(0,0,0,0.4)]">
        <div className="flex h-[38px] items-start text-black">
          <Icon w={23} h={31} className="ml-[4px] mt-px">
            <path d="M11.500 29.500C8 24 1.500 17 1.500 11.500A10 10 0 0 1 21.500 11.500C21.500 17 15 24 11.500 29.500Z" strokeWidth={1.5} />
            <circle cx="11.500" cy="12" r="4" strokeWidth={2} />
          </Icon>
          <span className="ml-[3px] mt-[5px] text-[12px] leading-[18px]">省份销售情</span>
          <span className="ml-auto mt-[8px] text-[12px] leading-[18px]">TOP</span>
          <div className="ml-[5px] mr-[15px] mt-[4px] h-[23px] w-[39px] border border-[#555]" />
        </div>
        <div className="ml-[42px] border-l border-[#d4d4d4] pt-[5px]">
          {provinces.map((p) => (
            <div key={p.name} className="-ml-[28px] mb-[7px] flex h-[16px] items-center whitespace-nowrap text-[9.300px] leading-none text-[#444]">
              <span className="w-[28px] shrink-0">{p.name}</span>
              <div className="h-full shrink-0 bg-[#5f13b8]" style={{ width: p.width }} />
              <span className={p.gap}>{p.value}</span>
            </div>
          ))}
        </div>
      </div>
    </div>
  );
}

function Sheet() {
  return (
    <div className="mt-[7px] flex shrink-0">
      <div className="w-[23px] shrink-0 text-[10.8px] text-[#222]">
        <div className="flex h-[16px] justify-end">
          <svg width="10" height="10" viewBox="0 0 10 10" className="mr-[3px] mt-[3px]"><path d="M10 0V10H0Z" fill="#a9a9a9" /></svg>
        </div>
        <div className="h-[436px] overflow-hidden border-r border-[#9a9a9a]">
          {ROWS.map((r) => (
            <div
              key={r}
              className={clsx("flex h-[17.5px] items-center justify-center border-b pt-[3px]", r === 2 || r === 4 || r === 6 ? "border-transparent" : "border-[#b5b5b5]")}
            >
              {r}
            </div>
          ))}
        </div>
      </div>
      <div className="w-[1027px] shrink-0">
        <div className="flex h-[16px] text-[11px] leading-[16px] text-[#222]">
          {COLUMNS.map((c) => (
            <div key={c} className={clsx("flex-1 border-r pl-px text-center", c === "C" || c === "J" || c === "Q" ? "border-transparent" : "border-[#aaa]")}>{c}</div>
          ))}
        </div>
        <div className="h-[436px] overflow-hidden bg-[#0b9aa3] pl-[4px] pt-[5px]">
          <div className="flex h-[431px] w-[792px] overflow-hidden rounded-tl-[8px] rounded-tr-[6px] bg-[#f7f7f9]">
            <Sidebar />
            <main className="flex w-[699px] shrink-0 flex-col">
              <TopArea />
              <div className="flex h-[196px] shrink-0">
                <TrendChart />
                <RatioChart />
              </div>
              <BottomArea />
            </main>
          </div>
        </div>
      </div>
      <div className="flex w-[20px] shrink-0 flex-col items-center bg-[#f2f2f2] text-[#6b6b6b]">
        <svg width="7" height="6" viewBox="0 0 7 6" className="mt-[4px]"><path d="M3.500 0L7 6H0Z" fill="currentColor" /></svg>
        <div className="mt-[5px] h-[181px] w-[7px] rounded-full bg-[#6b6b6b]" />
        <svg width="7" height="6" viewBox="0 0 7 6" className="mb-[1px] mt-auto"><path d="M3.500 6L7 0H0Z" fill="currentColor" /></svg>
      </div>
    </div>
  );
}

function SheetTabs() {
  const tabs = ["数据源", "备注情况", "透视分析", "标签", "补充数据", "信息表"];
  return (
    <div className="flex h-[28px] shrink-0 items-center whitespace-nowrap border-b border-[#c4c4c4] bg-[#f0f0f0] text-[12.3px] text-[#262626]">
      <Icon w={5} h={8} className="ml-[26px] text-[#999]"><path d="M4.500 0.500L1 4L4.500 7.500" /></Icon>
      <Icon w={5} h={8} className="ml-[23px] text-[#999]"><path d="M0.500 0.500L4 4L0.500 7.500" /></Icon>
      <div className="ml-[43px] flex h-[25px] w-[63px] justify-center self-start rounded-b-[4px] bg-white shadow-[0_0_2px_rgba(0,0,0,0.35)]">
        <span className="h-[22px] border-b border-[#107c41] leading-[24px]">销售情况</span>
      </div>
      <span className="ml-[15px] pt-[2px]">经营明细</span>
      {tabs.map((tab) => (
        <div key={tab} className="flex items-center">
          <Sep className="ml-[10px] h-[14px]" />
          <span className="ml-[10.900px] pt-[2px]">{tab}</span>
        </div>
      ))}
      <Sep className="ml-[10px] h-[14px]" />
      <div className="ml-[41px] h-[10px] w-px bg-[#444]" />
      <Icon w={2} h={10} className="ml-auto"><path d="M1 0.500V10" strokeWidth={2} strokeDasharray="2 2" /></Icon>
      <svg width="6" height="8" viewBox="0 0 6 8" className="ml-[17px]"><path d="M6 0V8L0 4Z" fill="#666" /></svg>
      <div className="ml-[5px] h-[8px] w-[135px] rounded-full bg-[#6b6b6b]" />
      <svg width="6" height="8" viewBox="0 0 6 8" className="ml-[48px] mr-[21px]"><path d="M0 0V8L6 4Z" fill="#666" /></svg>
    </div>
  );
}

function StatusBar() {
  return (
    <footer className="flex h-[20px] shrink-0 items-center bg-[#f5f5f5] text-[10.5px] leading-none text-[#262626]">
      <span className="ml-[10px]">就绪</span>
      <Icon w={13} h={12} className="ml-[18px]">
        <path d="M0.500 1.500H12.500M0.500 4.500H5M0.500 7.500H4M1 10.500H5M2 10V9" />
        <circle cx="8.500" cy="7" r="3.500" />
        <circle cx="8.500" cy="7" r="1.200" fill="currentColor" />
      </Icon>
      <div className="ml-auto flex h-[19px] w-[35px] items-center justify-center bg-[#dcdcdc]">
        <Icon w={12} h={12}><path d="M0.500 0.500H11.500V11.500H0.500ZM0.500 4H11.500M0.500 8H11.500M4 0.500V11.500" /></Icon>
      </div>
      <Icon w={12} h={12} className="ml-[12px]"><path d="M0.500 0.500H11.500V11.500H0.500ZM3 2.500H9V9.500H3ZM4.500 5H7.500M4.500 7H7.500" /></Icon>
      <Icon w={12} h={12} className="ml-[23px]"><path d="M0 0.500H11.500V11.500H0.500M5.500 0.500V6.500M0 6.500H9" /></Icon>
      <Icon w={7} h={7} className="ml-[16px]"><path d="M0 3.500H7" /></Icon>
      <div className="ml-[5px] flex h-[9px] w-[87px] items-center">
        <div className="h-px w-[35px] bg-[#666]" />
        <div className="h-[9px] w-[4px] bg-[#555]" />
        <div className="h-px w-[5px] bg-[#666]" />
        <div className="h-[5px] w-px bg-[#666]" />
        <div className="h-px flex-1 bg-[#666]" />
      </div>
      <Icon w={7} h={7} className="ml-[5px]"><path d="M0 3.500H7M3.500 0V7" /></Icon>
      <span className="ml-[11px] mr-[15px] w-[24px]">85%</span>
    </footer>
  );
}

export default function App() {
  return (
    <div className="h-[711px] w-[1079px] overflow-hidden bg-[#e2e2e2] pl-[4px] pt-[4px] font-['Open_Sans','Noto_Sans_CJK_SC',sans-serif]">
      <div className="relative flex h-[702px] w-[1070px] flex-col overflow-hidden rounded-[8px] bg-[#f0f0f1] shadow-[0_0_1px_1px_rgba(0,0,0,0.35),0_3px_6px_rgba(0,0,0,0.3)]">
        <TitleBar />
        <RibbonTabs />
        <Ribbon />
        <FormulaBar />
        <Sheet />
        <SheetTabs />
        <StatusBar />
        {/* 鼠标指针 */}
        <svg width="12" height="18" viewBox="0 0 12 18" className="absolute left-[231px] top-[641px]">
          <path d="M0.500 0.500V14L3.800 11L6 16.500L8.300 15.500L6 10.500H10.500Z" fill="white" stroke="black" strokeWidth="0.900" />
        </svg>
      </div>
    </div>
  );
}
